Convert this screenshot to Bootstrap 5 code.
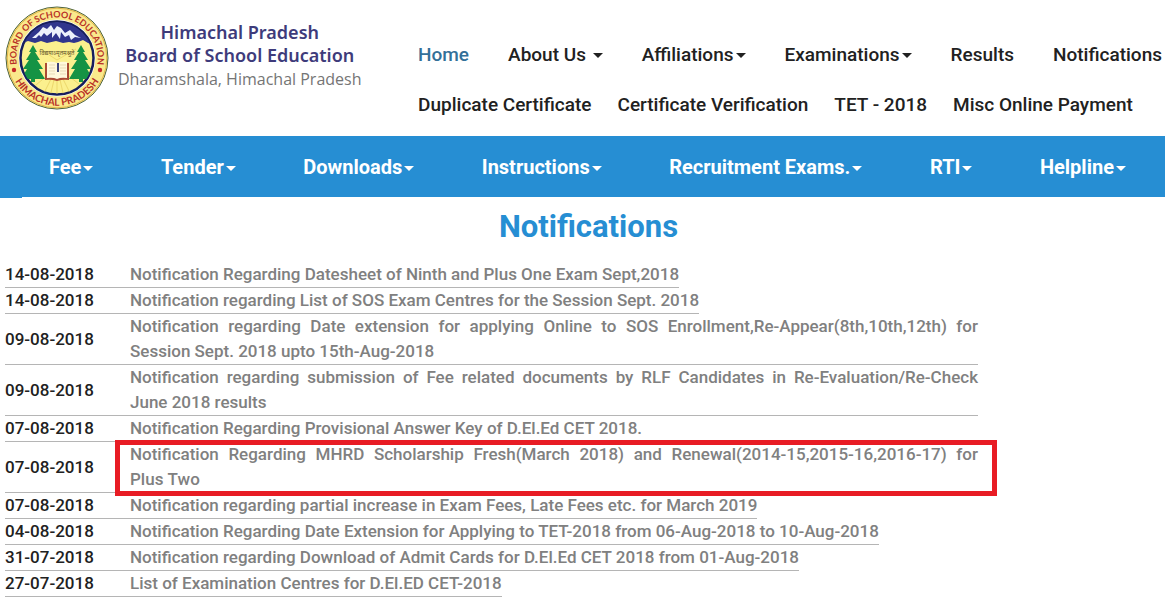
<!DOCTYPE html>
<html lang="en">
<head>
<meta charset="utf-8">
<meta name="viewport" content="width=device-width, initial-scale=1">
<title>Himachal Pradesh Board of School Education</title>
<link href="https://cdn.jsdelivr.net/npm/bootstrap@5.3.0/dist/css/bootstrap.min.css" rel="stylesheet">
<style>
  body { font-family: Roboto, "Liberation Sans", sans-serif; font-weight: 500; font-size: 17px; line-height: 25px; color: #212121; }
  a { text-decoration: none; }
  .site-header { min-height: 136px; padding: 5px 3px 0 4px; }
  .brand { gap: 8px; font-family: "Noto Sans", "Open Sans", sans-serif; }
  .brand-text { padding-bottom: 3px; }
  .brand-title { font-size: 18px; line-height: 23px; font-weight: 600; color: #3e3b7b; }
  .brand-place { font-family: "Open Sans", sans-serif; font-size: 16px; line-height: 25px; font-weight: 500; color: #757575; }
  .top-links { row-gap: 25px; padding-top: 37px; font-size: 19px; }
  .top-links a { color: #212121; white-space: nowrap; }
  .top-links a.active { color: #337099; }
  .first-line { column-gap: 39px; }
  .second-line { column-gap: 26px; }
  .dropdown-toggle::after { margin-left: 2px; vertical-align: 3px; border-top-width: 5px; border-left-width: 5px; border-right-width: 5px; }
  .bar { position: relative; min-height: 61px; background: #268ed3; padding: 2px 39px 0 49px; font-size: 20px; font-weight: 700; }
  .bar::before { content: ""; position: absolute; left: 0; top: 100%; width: 22px; height: 1px; background: #268ed3; }
  .bar a { color: #fff; white-space: nowrap; }
  .page-title { font-size: 31px; line-height: 40px; font-weight: 700; color: #268ed3; padding: 10px 0 15px 12px; }
  .notices { width: 973px; max-width: 100%; margin-left: 5px; border-collapse: separate; border-spacing: 0; }
  .notices th { width: 125px; padding: 0; font-weight: 500; border-bottom: 1px solid #b5b5b5; vertical-align: middle; }
  .notices td { padding: 0; }
  .notice-text { display: block; width: fit-content; color: #808080; border-bottom: 1px solid #b5b5b5; text-align: justify; }
  .marked { position: relative; }
  .marked::after { content: ""; position: absolute; inset: -2px -19px -4px -15px; border: 5px solid #e81c24; pointer-events: none; }
</style>
</head>
<body>
<header class="site-header d-flex align-items-start">
  <a href="#" class="brand d-flex flex-shrink-0 align-items-center">
    <svg width="106" height="106" viewBox="0 0 106 106" role="img" aria-label="Board emblem">
      <defs>
        <path id="arcTop" d="M16.600 71A40.600 40.600 0 1 1 89.400 71"/>
        <path id="arcBottom" d="M7.500 68A48 48 0 0 0 98.500 68"/>
        <clipPath id="disc"><circle cx="53" cy="53" r="36"/></clipPath>
      </defs>
      <circle cx="53" cy="53" r="51" fill="#fae98c" stroke="#4d6440" stroke-width="1"/>
      <circle cx="53" cy="53" r="49.800" fill="none" stroke="#e2b64b" stroke-width="1"/>
      <circle cx="53" cy="53" r="38.500" fill="#fff"/>
      <circle cx="53" cy="53" r="36.500" fill="#fbf08e" stroke="#171e5c" stroke-width="2.500"/>
      <g clip-path="url(#disc)">
        <path d="M15 10h76v30l-7-2-5-3-5 2-4 1-5-1-6 1-7-2-9 2-6-2-6 2-7-2-9 4z" fill="#30358d"/>
        <path d="M28 33l7-6 4-5 4 2 4-4 3 5 3-4 4 2 4 5 5-3 5 5 6 3-6-1-4 3-2-5-4 2-4-5-1 7-4-6-4 5 0-6-5 4-3-3-3 4-2-2-3 3z" fill="#edf1fb"/>
        <path d="M53 62L32 80M53 62L38 92M53 62L46 92M53 62v30M53 62l7 30M53 62l15 30M53 62l22 17M53 55L36 44M53 55l19-11" stroke="#e5cd5d" stroke-width=".7"/>
        <path d="M29 40l-4 7h2l-5 8h3l-6 9h4l-6 10h10v3h4v-3h10l-6-10h4l-6-9h3l-5-8h2z" fill="#159344"/>
        <path d="M77 40l-4 7h2l-5 8h3l-6 9h4l-6 10h10v3h4v-3h10l-6-10h4l-6-9h3l-5-8h2z" fill="#159344"/>
        <path d="M41 58h24v17q-6-1-12 1-6-2-12-1z" fill="#aa4b35"/>
        <path d="M43 57q6-1 10 1v16q-4-2-10-1zM53 58q4-2 10-1v16q-6-1-10 1z" fill="#fff8dc"/>
        <path d="M45 60h6m-6 3h6m-6 3h6m-6 3h6m5-9h6m-6 3h6m-6 3h6m-6 3h6" stroke="#ded0ab" stroke-width=".7"/>
        <path d="M54 58v9" stroke="#3b427b" stroke-width="2"/>
      </g>
      <text x="53" y="50" text-anchor="middle" font-family="Noto Sans, sans-serif" font-size="6" font-weight="400" fill="#62542b">विद्ययाऽमृतमश्नुते</text>
      <g font-family="Lato, Open Sans, sans-serif" font-weight="700" font-size="10" fill="#b82f27" text-anchor="middle">
        <text font-size="9"><textPath href="#arcTop" startOffset="50%">BOARD OF SCHOOL EDUCATION</textPath></text>
        <text><textPath href="#arcBottom" startOffset="50%">HIMACHAL PRADESH</textPath></text>
      </g>
      <circle cx="10" cy="65" r="2.200" fill="#c62828"/><circle cx="96" cy="65" r="2.200" fill="#c62828"/>
    </svg>
    <span class="brand-text text-center">
      <span class="brand-title d-block">Himachal Pradesh<br>Board of School Education</span>
      <span class="brand-place d-block">Dharamshala, Himachal Pradesh</span>
    </span>
  </a>
  <nav class="top-links d-flex flex-column ms-auto" aria-label="Main">
    <div class="first-line d-flex">
      <a href="#" class="active">Home</a>
      <a href="#" class="dropdown-toggle">About Us&nbsp;</a>
      <a href="#" class="dropdown-toggle">Affiliations</a>
      <a href="#" class="dropdown-toggle">Examinations</a>
      <a href="#">Results</a>
      <a href="#">Notifications</a>
    </div>
    <div class="second-line d-flex">
      <a href="#">Duplicate Certificate</a>
      <a href="#">Certificate Verification</a>
      <a href="#">TET - 2018</a>
      <a href="#">Misc Online Payment</a>
    </div>
  </nav>
</header>
<nav class="bar d-flex align-items-center justify-content-between" aria-label="Services">
  <a href="#" class="dropdown-toggle">Fee</a>
  <a href="#" class="dropdown-toggle">Tender</a>
  <a href="#" class="dropdown-toggle">Downloads</a>
  <a href="#" class="dropdown-toggle">Instructions</a>
  <a href="#" class="dropdown-toggle">Recruitment Exams.</a>
  <a href="#" class="dropdown-toggle">RTI</a>
  <a href="#" class="dropdown-toggle">Helpline</a>
</nav>
<main>
  <h1 class="page-title text-center mb-0">Notifications</h1>
  <table class="notices">
    <tbody>
      <tr><th scope="row">14-08-2018</th><td><a href="#" class="notice-text">Notification Regarding Datesheet of Ninth and Plus One Exam Sept,2018</a></td></tr>
      <tr><th scope="row">14-08-2018</th><td><a href="#" class="notice-text">Notification regarding List of SOS Exam Centres for the Session Sept. 2018</a></td></tr>
      <tr><th scope="row">09-08-2018</th><td><a href="#" class="notice-text">Notification regarding Date extension for applying Online to SOS Enrollment,Re-Appear(8th,10th,12th) for Session Sept. 2018 upto 15th-Aug-2018</a></td></tr>
      <tr><th scope="row">09-08-2018</th><td><a href="#" class="notice-text">Notification regarding submission of Fee related documents by RLF Candidates in Re-Evaluation/Re-Check June 2018 results</a></td></tr>
      <tr><th scope="row">07-08-2018</th><td><a href="#" class="notice-text">Notification Regarding Provisional Answer Key of D.El.Ed CET 2018.</a></td></tr>
      <tr><th scope="row">07-08-2018</th><td><a href="#" class="notice-text marked">Notification Regarding MHRD Scholarship Fresh(March 2018) and Renewal(2014-15,2015-16,2016-17) for Plus&nbsp;Two</a></td></tr>
      <tr><th scope="row">07-08-2018</th><td><a href="#" class="notice-text">Notification regarding partial increase in Exam Fees, Late Fees etc. for March 2019</a></td></tr>
      <tr><th scope="row">04-08-2018</th><td><a href="#" class="notice-text">Notification Regarding Date Extension for Applying to TET-2018 from 06-Aug-2018 to 10-Aug-2018</a></td></tr>
      <tr><th scope="row">31-07-2018</th><td><a href="#" class="notice-text">Notification regarding Download of Admit Cards for D.El.Ed CET 2018 from 01-Aug-2018</a></td></tr>
      <tr><th scope="row">27-07-2018</th><td><a href="#" class="notice-text">List of Examination Centres for D.El.ED CET-2018</a></td></tr>
    </tbody>
  </table>
</main>
<script src="https://cdn.jsdelivr.net/npm/bootstrap@5.3.0/dist/js/bootstrap.bundle.min.js"></script>
</body>
</html>
